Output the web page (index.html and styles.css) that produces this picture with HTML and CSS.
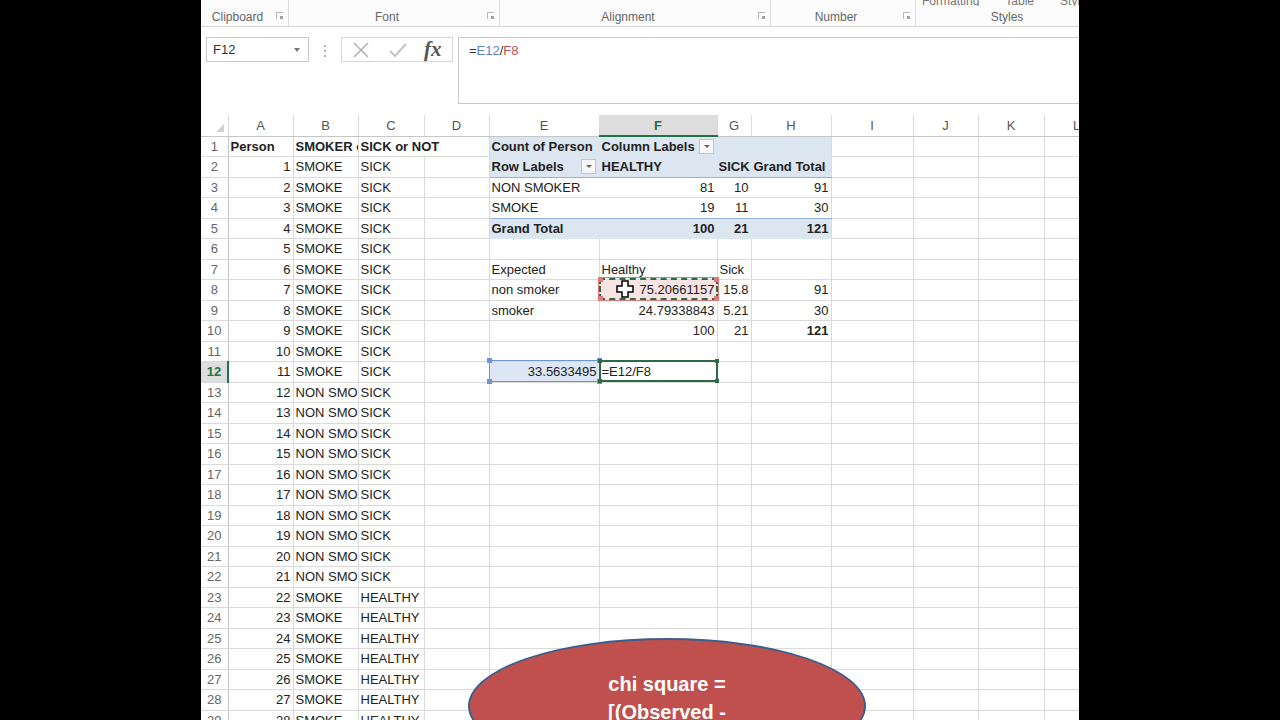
FILE: index.html
```html
<!DOCTYPE html>
<html lang="en">
<head>
  <meta charset="UTF-8">
  <title>Chi square - Book1</title>
  <link rel="stylesheet" href="styles.css">
</head>
<body>
  <div class="screen">

    <div class="ribbon">
      <div class="group g-clip"><span class="sub"></span><span class="label">Clipboard</span><i class="launch"></i></div>
      <div class="group g-font"><span class="sub"></span><span class="label">Font</span><i class="launch"></i></div>
      <div class="group g-align"><span class="sub"></span><span class="label">Alignment</span><i class="launch"></i></div>
      <div class="group g-num"><span class="sub"></span><span class="label">Number</span><i class="launch"></i></div>
      <div class="group g-styles">
        <span class="sub"><span>Formatting</span><span>Table</span><span>Styles</span></span>
        <span class="label">Styles</span>
      </div>
    </div>

    <div class="formula-bar">
      <div class="name-box">F12<span class="caret"></span></div>
      <div class="grip"><i></i><i></i><i></i></div>
      <div class="fx-box">
        <svg class="ico" width="18" height="18" viewBox="0 0 18 18"><path d="M2 2 L16 16 M16 2 L2 16" stroke="#b4b4b4" stroke-width="1.6" fill="none"/></svg>
        <svg class="ico" width="20" height="18" viewBox="0 0 20 18"><path d="M2 10 L7 15 L18 3" stroke="#c4c4c4" stroke-width="2" fill="none"/></svg>
        <span class="fx">fx</span>
      </div>
      <div class="formula"><span class="op">=</span><span class="r-blue">E12</span><span class="op">/</span><span class="r-red">F8</span></div>
    </div>

    <div class="sheet-wrap">
      <table class="sheet">
        <colgroup>
          <col class="w-hd"><col class="w-a"><col class="w-b"><col class="w-c"><col class="w-d"><col class="w-e"><col class="w-f"><col class="w-g"><col class="w-h"><col class="w-i"><col class="w-j"><col class="w-k"><col class="w-l">
        </colgroup>
        <thead>
          <tr>
            <th class="corner"></th><th>A</th><th>B</th><th>C</th><th>D</th><th>E</th><th class="on">F</th><th>G</th><th>H</th><th>I</th><th>J</th><th>K</th><th>L</th>
          </tr>
        </thead>
        <tbody>
          <tr><th>1</th><td class="b">Person</td><td class="b">SMOKER or NOT</td><td class="b spill">SICK or NOT</td><td></td><td class="pv b">Count of Person</td><td class="pv b"><div class="lab">Column Labels<span class="filter"></span></div></td><td class="pv"></td><td class="pv pe"></td><td></td><td></td><td></td><td></td></tr>
          <tr><th>2</th><td class="n">1</td><td>SMOKE</td><td>SICK</td><td></td><td class="pv sep b"><div class="lab">Row Labels<span class="filter"></span></div></td><td class="pv sep b">HEALTHY</td><td class="pv sep b tight">SICK</td><td class="pv pe sep b">Grand Total</td><td></td><td></td><td></td><td></td></tr>
          <tr><th>3</th><td class="n">2</td><td>SMOKE</td><td>SICK</td><td></td><td class="pb">NON SMOKER</td><td class="pb n">81</td><td class="pb n">10</td><td class="n">91</td><td></td><td></td><td></td><td></td></tr>
          <tr><th>4</th><td class="n">3</td><td>SMOKE</td><td>SICK</td><td></td><td class="pb sep">SMOKE</td><td class="pb sep n">19</td><td class="pb sep n">11</td><td class="sep n">30</td><td></td><td></td><td></td><td></td></tr>
          <tr><th>5</th><td class="n">4</td><td>SMOKE</td><td>SICK</td><td></td><td class="pv b">Grand Total</td><td class="pv b n">100</td><td class="pv b n">21</td><td class="pv pe b n">121</td><td></td><td></td><td></td><td></td></tr>
          <tr><th>6</th><td class="n">5</td><td>SMOKE</td><td>SICK</td><td></td><td></td><td></td><td></td><td></td><td></td><td></td><td></td><td></td></tr>
          <tr><th>7</th><td class="n">6</td><td>SMOKE</td><td>SICK</td><td></td><td>Expected</td><td>Healthy</td><td>Sick</td><td></td><td></td><td></td><td></td><td></td></tr>
          <tr><th>8</th><td class="n">7</td><td>SMOKE</td><td>SICK</td><td></td><td>non smoker</td><td class="n copied">75.20661157</td><td class="n">15.8</td><td class="n">91</td><td></td><td></td><td></td><td></td></tr>
          <tr><th>9</th><td class="n">8</td><td>SMOKE</td><td>SICK</td><td></td><td>smoker</td><td class="n">24.79338843</td><td class="n">5.21</td><td class="n">30</td><td></td><td></td><td></td><td></td></tr>
          <tr><th>10</th><td class="n">9</td><td>SMOKE</td><td>SICK</td><td></td><td></td><td class="n">100</td><td class="n">21</td><td class="n b">121</td><td></td><td></td><td></td><td></td></tr>
          <tr><th>11</th><td class="n">10</td><td>SMOKE</td><td>SICK</td><td></td><td></td><td></td><td></td><td></td><td></td><td></td><td></td><td></td></tr>
          <tr><th class="on">12</th><td class="n">11</td><td>SMOKE</td><td>SICK</td><td></td><td class="n ref">33.5633495</td><td>=E12/F8</td><td></td><td></td><td></td><td></td><td></td><td></td></tr>
          <tr><th>13</th><td class="n">12</td><td>NON SMOKER</td><td>SICK</td><td></td><td></td><td></td><td></td><td></td><td></td><td></td><td></td><td></td></tr>
          <tr><th>14</th><td class="n">13</td><td>NON SMOKER</td><td>SICK</td><td></td><td></td><td></td><td></td><td></td><td></td><td></td><td></td><td></td></tr>
          <tr><th>15</th><td class="n">14</td><td>NON SMOKER</td><td>SICK</td><td></td><td></td><td></td><td></td><td></td><td></td><td></td><td></td><td></td></tr>
          <tr><th>16</th><td class="n">15</td><td>NON SMOKER</td><td>SICK</td><td></td><td></td><td></td><td></td><td></td><td></td><td></td><td></td><td></td></tr>
          <tr><th>17</th><td class="n">16</td><td>NON SMOKER</td><td>SICK</td><td></td><td></td><td></td><td></td><td></td><td></td><td></td><td></td><td></td></tr>
          <tr><th>18</th><td class="n">17</td><td>NON SMOKER</td><td>SICK</td><td></td><td></td><td></td><td></td><td></td><td></td><td></td><td></td><td></td></tr>
          <tr><th>19</th><td class="n">18</td><td>NON SMOKER</td><td>SICK</td><td></td><td></td><td></td><td></td><td></td><td></td><td></td><td></td><td></td></tr>
          <tr><th>20</th><td class="n">19</td><td>NON SMOKER</td><td>SICK</td><td></td><td></td><td></td><td></td><td></td><td></td><td></td><td></td><td></td></tr>
          <tr><th>21</th><td class="n">20</td><td>NON SMOKER</td><td>SICK</td><td></td><td></td><td></td><td></td><td></td><td></td><td></td><td></td><td></td></tr>
          <tr><th>22</th><td class="n">21</td><td>NON SMOKER</td><td>SICK</td><td></td><td></td><td></td><td></td><td></td><td></td><td></td><td></td><td></td></tr>
          <tr><th>23</th><td class="n">22</td><td>SMOKE</td><td>HEALTHY</td><td></td><td></td><td></td><td></td><td></td><td></td><td></td><td></td><td></td></tr>
          <tr><th>24</th><td class="n">23</td><td>SMOKE</td><td>HEALTHY</td><td></td><td></td><td></td><td></td><td></td><td></td><td></td><td></td><td></td></tr>
          <tr><th>25</th><td class="n">24</td><td>SMOKE</td><td>HEALTHY</td><td></td><td></td><td></td><td></td><td></td><td></td><td></td><td></td><td></td></tr>
          <tr><th>26</th><td class="n">25</td><td>SMOKE</td><td>HEALTHY</td><td></td><td></td><td></td><td></td><td></td><td></td><td></td><td></td><td></td></tr>
          <tr><th>27</th><td class="n">26</td><td>SMOKE</td><td>HEALTHY</td><td></td><td></td><td></td><td></td><td></td><td></td><td></td><td></td><td></td></tr>
          <tr><th>28</th><td class="n">27</td><td>SMOKE</td><td>HEALTHY</td><td></td><td></td><td></td><td></td><td></td><td></td><td></td><td></td><td></td></tr>
          <tr><th>29</th><td class="n">28</td><td>SMOKE</td><td>HEALTHY</td><td></td><td></td><td></td><td></td><td></td><td></td><td></td><td></td><td></td></tr>
        </tbody>
      </table>

      <!-- marks drawn over the grid -->
      <div class="mark copy-mark"><i class="dot tl"></i><i class="dot tr"></i><i class="dot bl"></i><i class="dot br"></i></div>
      <div class="mark ref-mark"><i class="dot tl"></i><i class="dot tr"></i><i class="dot bl"></i><i class="dot br"></i></div>
      <div class="mark active-mark"><i class="dot tl"></i><i class="dot tr"></i><i class="dot bl"></i><i class="dot br"></i></div>
      <svg class="cursor" width="18" height="18" viewBox="0 0 18 18">
        <path d="M6 1 H12 V6 H17 V12 H12 V17 H6 V12 H1 V6 H6 Z" fill="#fff" stroke="#000" stroke-width="1.5"/>
      </svg>
    </div>

    <div class="shape">chi square =<br>[(Observed -<br>Expected)^2 /<br>Expected]</div>
  </div>
</body>
</html>
```

FILE: styles.css
```css
body {
  margin: 0;
  background: #000;
  font-family: "Liberation Sans", Arial, sans-serif;
}

.screen {
  position: relative;
  width: 878px;
  height: 720px;
  margin-left: 201px;
  background: #fff;
  overflow: hidden;
}

/* ribbon group captions */
.ribbon {
  display: flex;
  height: 26px;
  border-bottom: 1px solid #d6d6d6;
  background: #fcfcfc;
}

.group {
  position: relative;
  flex-shrink: 0;
  display: flex;
  flex-direction: column;
  align-items: center;
  justify-content: flex-end;
  padding: 0 14px 2px 0;
  border-right: 1px solid #dcdcdc;
  box-sizing: border-box;
  font-size: 12px;
  color: #666;
}

.g-clip { width: 88px; }
.g-font { width: 211px; }
.g-align { width: 271px; }
.g-num { width: 145px; }
.g-styles { width: 182px; padding-right: 0; border-right: none; }

.sub {
  display: flex;
  gap: 26px;
  height: 6px;
  overflow: hidden;
  line-height: 2px;
  color: #777;
  align-self: flex-start;
  padding-left: 6px;
}

.label {
  line-height: 14px;
  margin-top: 4px;
}

.launch {
  position: absolute;
  right: 5px;
  bottom: 7px;
  width: 6px;
  height: 6px;
  border: 1px solid #b8b8b8;
  border-width: 1px 0 0 1px;
}

.launch::after {
  content: "";
  position: absolute;
  right: 0;
  bottom: 0;
  width: 3px;
  height: 3px;
  background: #a0a0a0;
}

/* formula bar */
.formula-bar {
  display: flex;
  align-items: flex-start;
  height: 88px;
  padding: 10px 0 0 5px;
  box-sizing: border-box;
}

.name-box {
  position: relative;
  width: 103px;
  height: 25px;
  padding-left: 6px;
  border: 1px solid #c8c8c8;
  box-sizing: border-box;
  font-size: 13px;
  line-height: 23px;
  color: #333;
}

.caret {
  position: absolute;
  right: 8px;
  top: 10px;
  border-left: 3px solid transparent;
  border-right: 3px solid transparent;
  border-top: 4px solid #777;
}

.grip {
  display: flex;
  flex-direction: column;
  gap: 3px;
  width: 32px;
  padding-top: 8px;
  align-items: center;
}

.grip i {
  width: 2px;
  height: 2px;
  background: #b0b0b0;
}

.fx-box {
  display: flex;
  align-items: center;
  gap: 18px;
  width: 112px;
  height: 25px;
  padding-left: 10px;
  border: 1px solid #d6d6d6;
  box-sizing: border-box;
}

.fx {
  font-family: "Liberation Serif", serif;
  font-style: italic;
  font-weight: bold;
  font-size: 21px;
  color: #555;
  margin-left: -2px;
}

.formula {
  flex: 1;
  height: 67px;
  margin-left: 5px;
  padding: 5px 0 0 10px;
  border: 1px solid #c8c8c8;
  border-right: none;
  box-sizing: border-box;
  font-size: 13px;
  line-height: 16px;
}

.op { color: #333; }
.r-blue { color: #5b84c8; }
.r-red { color: #c0504d; }

/* grid */
.sheet-wrap {
  position: relative;
}

.sheet {
  table-layout: fixed;
  border-collapse: collapse;
  width: 908px;
  font-size: 13px;
  color: #222;
}

.w-hd { width: 27px; }
.w-a { width: 65px; }
.w-b { width: 65px; }
.w-c { width: 66px; }
.w-d { width: 65px; }
.w-e { width: 110px; }
.w-f { width: 118px; }
.w-g { width: 34px; }
.w-h { width: 80px; }
.w-i { width: 82px; }
.w-j { width: 65px; }
.w-k { width: 66px; }
.w-l { width: 65px; }

thead th {
  height: 20px;
  padding: 0;
  font-weight: normal;
  color: #555;
  background: #fff;
  border-right: 1px solid #dadada;
  border-bottom: 1px solid #c6c6c6;
}

thead th.on {
  background: #dedede;
  color: #217346;
  font-weight: bold;
  border-bottom: 2px solid #217346;
}

.corner {
  position: relative;
}

.corner::after {
  content: "";
  position: absolute;
  right: 4px;
  bottom: 4px;
  border-left: 8px solid transparent;
  border-bottom: 8px solid #d0d0d0;
}

tbody tr {
  height: 20.5px;
}

tbody th {
  padding: 0;
  font-weight: normal;
  color: #666;
  background: #fff;
  border-right: 1px solid #c6c6c6;
  border-bottom: 1px solid #dadada;
}

tbody th.on {
  background: #dedede;
  color: #217346;
  font-weight: bold;
  border-right: 2px solid #217346;
}

td {
  padding: 0 2px;
  border-right: 1px solid #dadada;
  border-bottom: 1px solid #dadada;
  white-space: nowrap;
  overflow: hidden;
  line-height: 19px;
}

td.n { text-align: right; }
td.b { font-weight: bold; }
td.tight { padding-left: 1px; }

td.spill {
  overflow: visible;
  border-right: none;
}

/* pivot table */
td.pv {
  background: #dce6f1;
  border-right-color: #dce6f1;
  border-bottom-color: #dce6f1;
}

td.pb {
  border-right-color: #fff;
}

td.pe {
  border-right-color: #dadada;
}

td.sep {
  border-bottom-color: #95b3d7;
}

.lab {
  display: flex;
  align-items: center;
  justify-content: space-between;
}

.filter {
  position: relative;
  width: 13px;
  height: 13px;
  margin-right: 1px;
  border: 1px solid #c4c4c4;
  background: #f7f7f7;
}

.filter::after {
  content: "";
  position: absolute;
  left: 4px;
  top: 5px;
  border-left: 3px solid transparent;
  border-right: 3px solid transparent;
  border-top: 3px solid #666;
}

td.copied { background: #f6e3e3; }
td.ref { background: #dce6f5; }

/* selection and reference marks */
.mark {
  position: absolute;
  box-sizing: border-box;
  pointer-events: none;
}

.copy-mark {
  left: 398px;
  top: 163px;
  width: 119px;
  height: 22px;
  border: 2px dashed #2e6b44;
  box-shadow: 0 0 0 1px #e07a7a;
}

.ref-mark {
  left: 288px;
  top: 245px;
  width: 111px;
  height: 22px;
  border: 1px solid #6f94d4;
}

.active-mark {
  left: 398px;
  top: 245px;
  width: 119px;
  height: 22px;
  border: 2px solid #2e6b44;
}

.dot {
  position: absolute;
  width: 5px;
  height: 5px;
  background: #e07a7a;
}

.ref-mark .dot { background: #6f94d4; }
.active-mark .dot { background: #2e6b44; width: 4px; height: 4px; }

.dot.tl { left: -3px; top: -3px; }
.dot.tr { right: -3px; top: -3px; }
.dot.bl { left: -3px; bottom: -3px; }
.dot.br { right: -3px; bottom: -3px; }

.cursor {
  position: absolute;
  left: 415px;
  top: 165px;
}

/* shape */
.shape {
  position: absolute;
  left: 267px;
  top: 638px;
  width: 398px;
  height: 136px;
  padding-top: 30px;
  border: 2px solid #3b5e8c;
  border-radius: 50%;
  box-sizing: border-box;
  background: #c0504d;
  color: #fff;
  font-size: 20px;
  font-weight: bold;
  line-height: 28px;
  text-align: center;
}
```
